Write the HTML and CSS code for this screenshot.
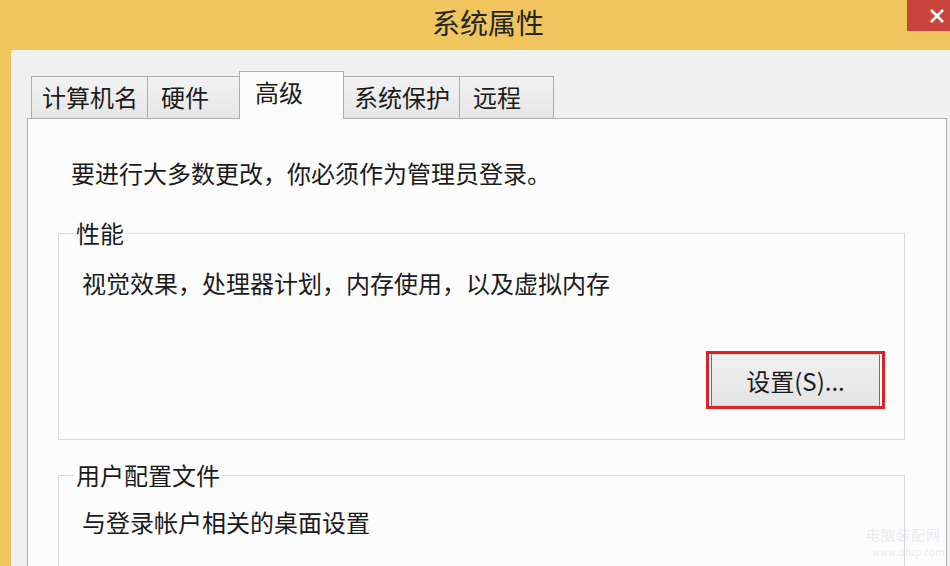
FILE: index.html
```html
<!DOCTYPE html>
<html lang="zh-CN">
<head>
    <meta charset="UTF-8">
    <meta name="viewport" content="width=device-width, initial-scale=1.0">
    <title>系统属性</title>
    <link rel="stylesheet" href="styles.css">
</head>
<body>
    <div class="window">
        <div class="titlebar">
            <span class="title">系统属性</span>
        </div>

        <div class="client">
            <div class="tabs">
                <div class="tab wide">计算机名</div>
                <div class="tab">硬件</div>
                <div class="tab active">高级</div>
                <div class="tab wide">系统保护</div>
                <div class="tab">远程</div>
            </div>

            <div class="panel">
                <p class="note">要进行大多数更改，你必须作为管理员登录。</p>

                <fieldset class="group">
                    <legend>性能</legend>
                    <p class="desc">视觉效果，处理器计划，内存使用，以及虚拟内存</p>
                    <div class="actions">
                        <span class="mark"><button class="btn">设置(S)...</button></span>
                    </div>
                </fieldset>

                <fieldset class="group last">
                    <legend>用户配置文件</legend>
                    <p class="desc second">与登录帐户相关的桌面设置</p>
                </fieldset>
            </div>
        </div>
    </div>

    <div class="close">
        <svg width="18" height="18" viewBox="0 0 18 18">
            <path d="M3 3 L15 15 M15 3 L3 15" stroke="#ffffff" stroke-width="2.6" fill="none"/>
        </svg>
    </div>

    <div class="watermark">
        <span class="wm-name">电脑装配网</span>
        <span class="wm-url">www.dnzp.com</span>
    </div>
</body>
</html>
```

FILE: styles.css
```css
body {
    margin: 0;
    height: 566px;
    overflow: hidden;
    background-color: #f0c55d;
    font-family: 'Noto Sans CJK SC', 'Microsoft YaHei', sans-serif;
    color: #1b1b1b;
}

.window {
    width: 976px;
}

.titlebar {
    height: 50px;
    background-color: #f0c55d;
    text-align: center;
}

.title {
    display: block;
    font-size: 28px;
    line-height: 44px;
    color: #262626;
}

/* close button sits over the title bar edge */
.close {
    position: absolute;
    top: 0;
    right: 0;
    width: 43px;
    height: 31px;
    background-color: #c9453c;
    display: flex;
    align-items: center;
    justify-content: flex-end;
    padding-right: 4px;
    box-sizing: border-box;
}

.client {
    margin: 0 11px;
    background-color: #f0f0f0;
    border-top: 1px solid #f6f1e4;
    padding: 0 18px 0 16px;
}

.tabs {
    display: flex;
    align-items: flex-end;
    height: 67px;
    padding-left: 4px;
}

.tab {
    box-sizing: border-box;
    height: 42px;
    min-width: 95px;
    padding: 0 10px 0 13px;
    margin-right: -1px;
    border: 1px solid #acacac;
    border-bottom: none;
    background: linear-gradient(#f2f2f2, #e6e6e6);
    font-size: 24px;
    line-height: 40px;
    white-space: nowrap;
}

.tab.wide {
    padding: 0 9px 0 10px;
}

.tab.active {
    position: relative;
    z-index: 1;
    height: 48px;
    min-width: 105px;
    margin: 0 -1px -1px -2px;
    padding: 0 10px 6px 15px;
    background: #fcfcfc;
}

.panel {
    border: 1px solid #acacac;
    border-bottom: none;
    background-color: #fcfcfc;
    padding: 39px 41px 0 30px;
}

.note {
    margin: 0;
    padding-left: 13px;
    font-size: 24px;
    line-height: 30px;
}

.group {
    margin: 31px 0 0;
    border: 1px solid #d8d8d8;
    padding: 0 19px 30px 15px;
}

.group legend {
    padding: 0 2px;
    font-size: 24px;
    line-height: 28px;
}

.desc {
    margin: 21px 0 0;
    padding-left: 8px;
    font-size: 24px;
    line-height: 30px;
}

.desc.second {
    margin-top: 18px;
}

/* runs off the bottom of the window, so no bottom edge */
.group.last {
    margin-top: 21px;
    padding-bottom: 30px;
    border-bottom: none;
}

.actions {
    display: flex;
    justify-content: flex-end;
    margin-top: 53px;
}

.mark {
    display: block;
    border: 3px solid #d9232b;
    padding: 0 2px;
}

.btn {
    display: block;
    width: 169px;
    height: 52px;
    border: 1px solid #cfcfcf;
    border-left-color: #3b78d6;
    border-right-color: #3b78d6;
    background: linear-gradient(#f0f0f0, #e4e4e4);
    font-family: inherit;
    font-size: 24px;
    color: #1b1b1b;
    padding: 0;
}

.watermark {
    position: absolute;
    left: 866px;
    top: 524px;
    display: flex;
    flex-direction: column;
    color: rgba(200, 208, 220, 0.4);
}

.wm-name {
    font-size: 14px;
    line-height: 20px;
    letter-spacing: 1px;
}

.wm-url {
    font-size: 10px;
    line-height: 16px;
    padding-left: 6px;
}
```
